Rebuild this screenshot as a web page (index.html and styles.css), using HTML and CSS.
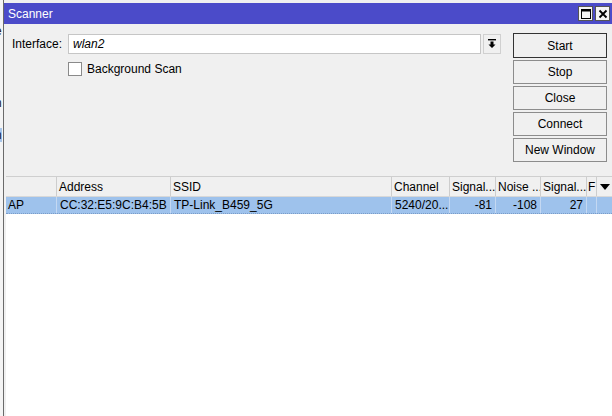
FILE: index.html
```html
<!DOCTYPE html>
<html>
<head>
<meta charset="utf-8">
<link rel="stylesheet" href="styles.css">
</head>
<body>
<div class="desk">
  <div class="behind">
    <span class="frag f1">e</span>
    <span class="frag f2">n</span>
    <span class="frag f3">n</span>
  </div>
  <div class="win">
    <div class="titlebar">
      <span class="title">Scanner</span>
      <div class="tbtns">
        <span class="tbtn"><svg width="12" height="12" viewBox="0 0 12 12"><rect x="1.5" y="1.5" width="9" height="9" fill="none" stroke="#000" stroke-width="1"/><rect x="1.5" y="1.5" width="9" height="2" fill="#000"/></svg></span>
        <span class="tbtn"><svg width="12" height="12" viewBox="0 0 12 12"><path d="M2.5 2.5 L9.5 9.5 M9.5 2.5 L2.5 9.5" stroke="#000" stroke-width="1.8"/></svg></span>
      </div>
    </div>
    <div class="top">
      <div class="form">
        <div class="row">
          <span class="lbl">Interface:</span>
          <div class="input">wlan2</div>
          <div class="dd"><svg width="10" height="12" viewBox="0 0 10 12"><rect x="1" y="1" width="8" height="1.4" fill="#000"/><path d="M3.5 3.5 h3 v3 h2 L5 10 L1.5 6.5 h2 z" fill="#000"/></svg></div>
        </div>
        <div class="row cbrow">
          <span class="cb"></span>
          <span class="cblbl">Background Scan</span>
        </div>
      </div>
      <div class="btns">
        <div class="btn first">Start</div>
        <div class="btn">Stop</div>
        <div class="btn">Close</div>
        <div class="btn">Connect</div>
        <div class="btn">New Window</div>
      </div>
    </div>
    <div class="table">
      <div class="thead">
        <div class="c c0"></div>
        <div class="c c1">Address</div>
        <div class="c c2">SSID</div>
        <div class="c c3">Channel</div>
        <div class="c c4">Signal...</div>
        <div class="c c5">Noise ...</div>
        <div class="c c6">Signal...</div>
        <div class="c c7">F</div>
        <div class="c c8"><svg width="10" height="6" viewBox="0 0 10 6"><path d="M0 0 H10 L5 6 Z" fill="#000"/></svg></div>
      </div>
      <div class="trow sel">
        <div class="c c0">AP</div>
        <div class="c c1">CC:32:E5:9C:B4:5B</div>
        <div class="c c2">TP-Link_B459_5G</div>
        <div class="c c3">5240/20...</div>
        <div class="c c4 r">-81</div>
        <div class="c c5 r">-108</div>
        <div class="c c6 r">27</div>
        <div class="c c7"></div>
        <div class="c c8"></div>
      </div>
    </div>
  </div>
</div>
</body>
</html>
```
FILE: styles.css
```css
* { box-sizing: border-box; }
html, body { margin: 0; padding: 0; }
body {
  width: 612px; height: 416px; overflow: hidden;
  font-family: "Liberation Sans", Arial, sans-serif;
  font-size: 12px; color: #000;
  background: #f0f0f0;
}
.desk { display: flex; height: 416px; }
.behind {
  width: 4px; flex: none; background: #f4f4f4;
  border-right: 1px solid #6a6a6a;
  position: relative; overflow: hidden;
}
.frag { position: absolute; left: -5px; font-size: 12px; color: #222; }
.f1 { top: 24px; }
.f2 { top: 96px; }
.f3 { top: 128px; background: #a8c6ea; }
.win {
  flex: 1; display: flex; flex-direction: column;
  padding-top: 3px; background: #f0f0f0;
}
.titlebar {
  height: 21px; background: #4b4bc9;
  display: flex; align-items: center; justify-content: space-between;
  padding-left: 4px; padding-right: 2px;
}
.title { color: #fff; font-size: 12px; }
.tbtns { display: flex; gap: 2px; }
.tbtn {
  width: 15px; height: 15px; background: #f4f4f4;
  border: 1px solid #555; display: flex; align-items: center; justify-content: center;
}
.top { display: flex; height: 152px; }
.form { width: 505px; padding: 10px 0 0 8px; }
.row { display: flex; align-items: center; }
.lbl { width: 56px; }
.input {
  width: 413px; height: 20px; background: #fff;
  border: 1px solid #c6c6c6; font-style: italic;
  padding: 2px 4px; line-height: 14px;
}
.dd {
  width: 18px; height: 20px; margin-left: 2px;
  background: #f0f0f0; border: 1px solid #d0d0d0;
  display: flex; align-items: center; justify-content: center;
}
.cbrow { margin-top: 8px; padding-left: 56px; }
.cb {
  width: 14px; height: 14px; background: #fff;
  border: 1px solid #8a8a8a; margin-right: 5px;
}
.btns {
  display: flex; flex-direction: column; gap: 2px;
  padding-top: 9px; margin-left: 4px;
}
.btn {
  width: 94px; height: 24px; background: #f0f0f0;
  border: 1px solid #8c8c8c;
  display: flex; align-items: center; justify-content: center;
}
.btn.first { border-color: #333; height: 25px; }
.table {
  flex: 1; background: #fff; margin-left: 2px;
  border-top: 1px solid #cfcfcf;
}
.thead, .trow { display: flex; }
.thead { height: 20px; background: #f0f0f0; border-bottom: 1px solid #d8d8d8; }
.trow { height: 17px; }
.trow.sel { background: #9ec2ec; border-bottom: 1px dotted #7a9cc8; }
.c {
  flex: none; padding: 0 3px; white-space: nowrap; overflow: hidden;
  display: flex; align-items: center;
  border-right: 1px solid #cdcdcd;
}
.thead .c { padding: 0 2px; }
.trow .c { border-right: 1px solid #c4d8f2; }
.c.r { justify-content: flex-end; }
.c0 { width: 51px; }
.trow .c0 { padding-left: 2px; }
.c1 { width: 114px; }
.c2 { width: 221px; }
.c3 { width: 58px; }
.c4 { width: 46px; }
.c5 { width: 45px; }
.c6 { width: 46px; }
.c7 { width: 10px; }
.thead .c7 { padding: 0 1px; }
.c8 { width: 15px; border-right: none; justify-content: center; }
.trow .c8 { border-right: none; }
```
